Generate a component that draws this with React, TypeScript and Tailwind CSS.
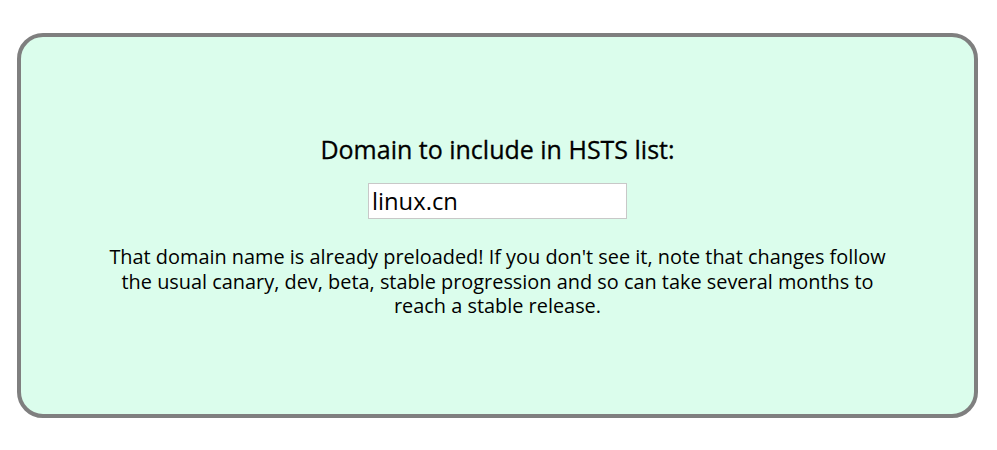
export default function App() {
  return (
    <div className="w-[997px] h-[450px] bg-white pt-[33px] pl-[17px]" style={{ fontFamily: '"Open Sans", "Noto Sans", sans-serif' }}>
      <div className="w-[961px] h-[385px] rounded-[26px] border-4 border-[#7f7f7f] bg-[#dbfdec] flex flex-col items-center pt-[97px] text-black">
        <h1 className="text-[25px] leading-[30px] [-webkit-text-stroke:0.3px_black]">Domain to include in HSTS list:</h1>
        <input
          type="text"
          defaultValue="linux.cn"
          className="mt-[19px] w-[259px] h-[36px] bg-white border border-[#c8c8c8] px-[3px] text-[23.8px] outline-none"
        />
        <p className="mt-[26px] w-[795px] text-center text-[19.9px] leading-[24.5px]">
          That domain name is already preloaded! If you don't see it, note that changes follow the usual canary, dev, beta, stable progression and so can take several months to reach a stable release.
        </p>
      </div>
    </div>
  )
}
